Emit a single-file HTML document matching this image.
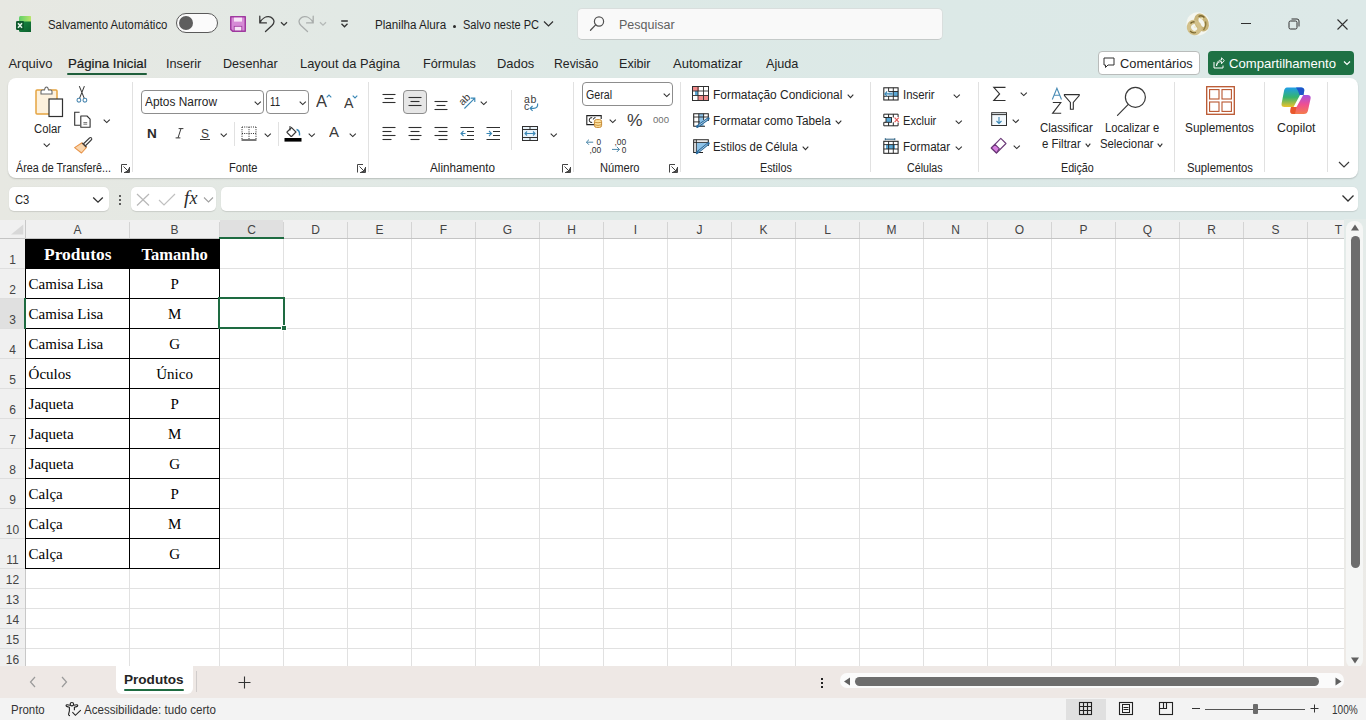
<!DOCTYPE html>
<html><head><meta charset="utf-8">
<style>
*{margin:0;padding:0;box-sizing:border-box}
html,body{width:1366px;height:720px;overflow:hidden;background:#e3ebe8;font-family:"Liberation Sans",sans-serif;color:#242424;position:relative}
.a{position:absolute;white-space:nowrap;line-height:normal;transform-origin:0 0}
svg.a{overflow:visible}
</style></head><body>
<div class="a" style="left:0;top:0;width:1366px;height:220px;background:linear-gradient(90deg,#e7e8e2 0%,#e2e9e5 25%,#dde9e6 45%,#dce9e7 70%,#dde9e8 100%)"></div>
<div class="a" style="left:577px;top:8px;width:366px;height:32px;background:#f9f9f9;border:1px solid #d9dedd;border-bottom-color:#c5cac9;border-radius:5px"></div>
<div class="a" style="left:8px;top:78px;width:1350px;height:100px;background:#fff;border-radius:8px;box-shadow:0 1px 1.5px rgba(0,0,0,.18)"></div>
<div class="a" style="left:9px;top:187px;width:100px;height:24px;background:#fff;border-radius:5px;box-shadow:0 0.5px 1px rgba(0,0,0,.12)"></div>
<div class="a" style="left:131px;top:187px;width:85px;height:24px;background:#fff;border-radius:5px;box-shadow:0 0.5px 1px rgba(0,0,0,.12)"></div>
<div class="a" style="left:221px;top:187px;width:1137px;height:24px;background:#fff;border-radius:5px;box-shadow:0 0.5px 1px rgba(0,0,0,.12)"></div>
<div class="a" style="left:0px;top:220px;width:1344px;height:18px;background:#f0f0f0"></div>
<div class="a" style="left:0px;top:238px;width:25px;height:428px;background:#f0f0f0"></div>
<div class="a" style="left:26px;top:239px;width:1318px;height:427px;background:#fff"></div>
<div class="a" style="left:220px;top:220px;width:63px;height:18px;background:#e0e0e0"></div>
<div class="a" style="left:0px;top:299px;width:24px;height:29px;background:#e0e0e0"></div>
<div class="a" style="left:219px;top:239px;width:1px;height:427px;background:#e1e1e1"></div><div class="a" style="left:219px;top:222px;width:1px;height:16px;background:#d4d4d4"></div><div class="a" style="left:283px;top:239px;width:1px;height:427px;background:#e1e1e1"></div><div class="a" style="left:283px;top:222px;width:1px;height:16px;background:#d4d4d4"></div><div class="a" style="left:347px;top:239px;width:1px;height:427px;background:#e1e1e1"></div><div class="a" style="left:347px;top:222px;width:1px;height:16px;background:#d4d4d4"></div><div class="a" style="left:411px;top:239px;width:1px;height:427px;background:#e1e1e1"></div><div class="a" style="left:411px;top:222px;width:1px;height:16px;background:#d4d4d4"></div><div class="a" style="left:475px;top:239px;width:1px;height:427px;background:#e1e1e1"></div><div class="a" style="left:475px;top:222px;width:1px;height:16px;background:#d4d4d4"></div><div class="a" style="left:539px;top:239px;width:1px;height:427px;background:#e1e1e1"></div><div class="a" style="left:539px;top:222px;width:1px;height:16px;background:#d4d4d4"></div><div class="a" style="left:603px;top:239px;width:1px;height:427px;background:#e1e1e1"></div><div class="a" style="left:603px;top:222px;width:1px;height:16px;background:#d4d4d4"></div><div class="a" style="left:667px;top:239px;width:1px;height:427px;background:#e1e1e1"></div><div class="a" style="left:667px;top:222px;width:1px;height:16px;background:#d4d4d4"></div><div class="a" style="left:731px;top:239px;width:1px;height:427px;background:#e1e1e1"></div><div class="a" style="left:731px;top:222px;width:1px;height:16px;background:#d4d4d4"></div><div class="a" style="left:795px;top:239px;width:1px;height:427px;background:#e1e1e1"></div><div class="a" style="left:795px;top:222px;width:1px;height:16px;background:#d4d4d4"></div><div class="a" style="left:859px;top:239px;width:1px;height:427px;background:#e1e1e1"></div><div class="a" style="left:859px;top:222px;width:1px;height:16px;background:#d4d4d4"></div><div class="a" style="left:923px;top:239px;width:1px;height:427px;background:#e1e1e1"></div><div class="a" style="left:923px;top:222px;width:1px;height:16px;background:#d4d4d4"></div><div class="a" style="left:987px;top:239px;width:1px;height:427px;background:#e1e1e1"></div><div class="a" style="left:987px;top:222px;width:1px;height:16px;background:#d4d4d4"></div><div class="a" style="left:1051px;top:239px;width:1px;height:427px;background:#e1e1e1"></div><div class="a" style="left:1051px;top:222px;width:1px;height:16px;background:#d4d4d4"></div><div class="a" style="left:1115px;top:239px;width:1px;height:427px;background:#e1e1e1"></div><div class="a" style="left:1115px;top:222px;width:1px;height:16px;background:#d4d4d4"></div><div class="a" style="left:1179px;top:239px;width:1px;height:427px;background:#e1e1e1"></div><div class="a" style="left:1179px;top:222px;width:1px;height:16px;background:#d4d4d4"></div><div class="a" style="left:1243px;top:239px;width:1px;height:427px;background:#e1e1e1"></div><div class="a" style="left:1243px;top:222px;width:1px;height:16px;background:#d4d4d4"></div><div class="a" style="left:1307px;top:239px;width:1px;height:427px;background:#e1e1e1"></div><div class="a" style="left:1307px;top:222px;width:1px;height:16px;background:#d4d4d4"></div><div class="a" style="left:129px;top:222px;width:1px;height:16px;background:#d4d4d4"></div><div class="a" style="left:129px;top:239px;width:1px;height:427px;background:#e1e1e1"></div><div class="a" style="left:26px;top:268px;width:1318px;height:1px;background:#e1e1e1"></div><div class="a" style="left:0px;top:268px;width:25px;height:1px;background:#dedede"></div><div class="a" style="left:26px;top:298px;width:1318px;height:1px;background:#e1e1e1"></div><div class="a" style="left:0px;top:298px;width:25px;height:1px;background:#dedede"></div><div class="a" style="left:26px;top:328px;width:1318px;height:1px;background:#e1e1e1"></div><div class="a" style="left:0px;top:328px;width:25px;height:1px;background:#dedede"></div><div class="a" style="left:26px;top:358px;width:1318px;height:1px;background:#e1e1e1"></div><div class="a" style="left:0px;top:358px;width:25px;height:1px;background:#dedede"></div><div class="a" style="left:26px;top:388px;width:1318px;height:1px;background:#e1e1e1"></div><div class="a" style="left:0px;top:388px;width:25px;height:1px;background:#dedede"></div><div class="a" style="left:26px;top:418px;width:1318px;height:1px;background:#e1e1e1"></div><div class="a" style="left:0px;top:418px;width:25px;height:1px;background:#dedede"></div><div class="a" style="left:26px;top:448px;width:1318px;height:1px;background:#e1e1e1"></div><div class="a" style="left:0px;top:448px;width:25px;height:1px;background:#dedede"></div><div class="a" style="left:26px;top:478px;width:1318px;height:1px;background:#e1e1e1"></div><div class="a" style="left:0px;top:478px;width:25px;height:1px;background:#dedede"></div><div class="a" style="left:26px;top:508px;width:1318px;height:1px;background:#e1e1e1"></div><div class="a" style="left:0px;top:508px;width:25px;height:1px;background:#dedede"></div><div class="a" style="left:26px;top:538px;width:1318px;height:1px;background:#e1e1e1"></div><div class="a" style="left:0px;top:538px;width:25px;height:1px;background:#dedede"></div><div class="a" style="left:26px;top:568px;width:1318px;height:1px;background:#e1e1e1"></div><div class="a" style="left:0px;top:568px;width:25px;height:1px;background:#dedede"></div><div class="a" style="left:26px;top:588px;width:1318px;height:1px;background:#e1e1e1"></div><div class="a" style="left:0px;top:588px;width:25px;height:1px;background:#dedede"></div><div class="a" style="left:26px;top:608px;width:1318px;height:1px;background:#e1e1e1"></div><div class="a" style="left:0px;top:608px;width:25px;height:1px;background:#dedede"></div><div class="a" style="left:26px;top:628px;width:1318px;height:1px;background:#e1e1e1"></div><div class="a" style="left:0px;top:628px;width:25px;height:1px;background:#dedede"></div><div class="a" style="left:26px;top:648px;width:1318px;height:1px;background:#e1e1e1"></div><div class="a" style="left:0px;top:648px;width:25px;height:1px;background:#dedede"></div><div class="a" style="left:26px;top:668px;width:1318px;height:1px;background:#e1e1e1"></div><div class="a" style="left:0px;top:668px;width:25px;height:1px;background:#dedede"></div>
<div class="a" style="left:0px;top:238px;width:1344px;height:1px;background:#c4c4c4"></div>
<div class="a" style="left:25px;top:220px;width:1px;height:446px;background:#c8c8c8"></div>
<svg class="a" style="left:8px;top:222px;" width="17" height="15" viewBox="0 0 17 15"><path d="M15.3 2.5 L15.3 12.5 L3 12.5 Z" fill="#d8d8d8"/></svg>
<div class="a" style="left:25px;top:239px;width:195px;height:30px;background:#000"></div>
<div class="a" style="left:25px;top:298px;width:195px;height:1px;background:#000"></div><div class="a" style="left:25px;top:328px;width:195px;height:1px;background:#000"></div><div class="a" style="left:25px;top:358px;width:195px;height:1px;background:#000"></div><div class="a" style="left:25px;top:388px;width:195px;height:1px;background:#000"></div><div class="a" style="left:25px;top:418px;width:195px;height:1px;background:#000"></div><div class="a" style="left:25px;top:448px;width:195px;height:1px;background:#000"></div><div class="a" style="left:25px;top:478px;width:195px;height:1px;background:#000"></div><div class="a" style="left:25px;top:508px;width:195px;height:1px;background:#000"></div><div class="a" style="left:25px;top:538px;width:195px;height:1px;background:#000"></div><div class="a" style="left:25px;top:568px;width:195px;height:1px;background:#000"></div><div class="a" style="left:25px;top:268px;width:1px;height:301px;background:#000"></div><div class="a" style="left:129px;top:268px;width:1px;height:301px;background:#000"></div><div class="a" style="left:219px;top:238px;width:1px;height:331px;background:#000"></div>
<div class="a" style="left:219px;top:237px;width:65px;height:2px;background:#1e6b41"></div>
<div class="a" style="left:24px;top:298px;width:2px;height:31px;background:#1e6b41"></div>
<div class="a" style="left:218px;top:297px;width:67px;height:32px;border:2px solid #1e6b41"></div>
<div class="a" style="left:281px;top:325px;width:6px;height:6px;background:#1e6b41;border:1px solid #fff"></div>
<span class="a" style="left:73.50px;top:222.56px;font-size:12px;font-weight:normal;color:#444;font-family:'Liberation Sans',sans-serif;">A</span>
<span class="a" style="left:170.50px;top:222.56px;font-size:12px;font-weight:normal;color:#444;font-family:'Liberation Sans',sans-serif;">B</span>
<span class="a" style="left:247.17px;top:222.56px;font-size:12px;font-weight:normal;color:#444;font-family:'Liberation Sans',sans-serif;">C</span>
<span class="a" style="left:311.17px;top:222.56px;font-size:12px;font-weight:normal;color:#444;font-family:'Liberation Sans',sans-serif;">D</span>
<span class="a" style="left:375.50px;top:222.56px;font-size:12px;font-weight:normal;color:#444;font-family:'Liberation Sans',sans-serif;">E</span>
<span class="a" style="left:439.83px;top:222.56px;font-size:12px;font-weight:normal;color:#444;font-family:'Liberation Sans',sans-serif;">F</span>
<span class="a" style="left:502.83px;top:222.56px;font-size:12px;font-weight:normal;color:#444;font-family:'Liberation Sans',sans-serif;">G</span>
<span class="a" style="left:567.17px;top:222.56px;font-size:12px;font-weight:normal;color:#444;font-family:'Liberation Sans',sans-serif;">H</span>
<span class="a" style="left:633.83px;top:222.56px;font-size:12px;font-weight:normal;color:#444;font-family:'Liberation Sans',sans-serif;">I</span>
<span class="a" style="left:696.50px;top:222.56px;font-size:12px;font-weight:normal;color:#444;font-family:'Liberation Sans',sans-serif;">J</span>
<span class="a" style="left:759.50px;top:222.56px;font-size:12px;font-weight:normal;color:#444;font-family:'Liberation Sans',sans-serif;">K</span>
<span class="a" style="left:824.16px;top:222.56px;font-size:12px;font-weight:normal;color:#444;font-family:'Liberation Sans',sans-serif;">L</span>
<span class="a" style="left:886.50px;top:222.56px;font-size:12px;font-weight:normal;color:#444;font-family:'Liberation Sans',sans-serif;">M</span>
<span class="a" style="left:951.17px;top:222.56px;font-size:12px;font-weight:normal;color:#444;font-family:'Liberation Sans',sans-serif;">N</span>
<span class="a" style="left:1014.83px;top:222.56px;font-size:12px;font-weight:normal;color:#444;font-family:'Liberation Sans',sans-serif;">O</span>
<span class="a" style="left:1079.50px;top:222.56px;font-size:12px;font-weight:normal;color:#444;font-family:'Liberation Sans',sans-serif;">P</span>
<span class="a" style="left:1142.83px;top:222.56px;font-size:12px;font-weight:normal;color:#444;font-family:'Liberation Sans',sans-serif;">Q</span>
<span class="a" style="left:1207.17px;top:222.56px;font-size:12px;font-weight:normal;color:#444;font-family:'Liberation Sans',sans-serif;">R</span>
<span class="a" style="left:1271.50px;top:222.56px;font-size:12px;font-weight:normal;color:#444;font-family:'Liberation Sans',sans-serif;">S</span>
<span class="a" style="left:1334.83px;top:222.56px;font-size:12px;font-weight:normal;color:#444;font-family:'Liberation Sans',sans-serif;">T</span>
<span class="a" style="left:9.16px;top:253.26px;font-size:12px;font-weight:normal;color:#444;font-family:'Liberation Sans',sans-serif;">1</span>
<span class="a" style="left:9.16px;top:283.26px;font-size:12px;font-weight:normal;color:#444;font-family:'Liberation Sans',sans-serif;">2</span>
<span class="a" style="left:9.16px;top:313.26px;font-size:12px;font-weight:normal;color:#444;font-family:'Liberation Sans',sans-serif;">3</span>
<span class="a" style="left:9.16px;top:343.26px;font-size:12px;font-weight:normal;color:#444;font-family:'Liberation Sans',sans-serif;">4</span>
<span class="a" style="left:9.16px;top:373.26px;font-size:12px;font-weight:normal;color:#444;font-family:'Liberation Sans',sans-serif;">5</span>
<span class="a" style="left:9.16px;top:403.26px;font-size:12px;font-weight:normal;color:#444;font-family:'Liberation Sans',sans-serif;">6</span>
<span class="a" style="left:9.16px;top:433.26px;font-size:12px;font-weight:normal;color:#444;font-family:'Liberation Sans',sans-serif;">7</span>
<span class="a" style="left:9.16px;top:463.26px;font-size:12px;font-weight:normal;color:#444;font-family:'Liberation Sans',sans-serif;">8</span>
<span class="a" style="left:9.16px;top:493.26px;font-size:12px;font-weight:normal;color:#444;font-family:'Liberation Sans',sans-serif;">9</span>
<span class="a" style="left:5.83px;top:523.26px;font-size:12px;font-weight:normal;color:#444;font-family:'Liberation Sans',sans-serif;">10</span>
<span class="a" style="left:6.27px;top:553.26px;font-size:12px;font-weight:normal;color:#444;font-family:'Liberation Sans',sans-serif;">11</span>
<span class="a" style="left:5.83px;top:573.26px;font-size:12px;font-weight:normal;color:#444;font-family:'Liberation Sans',sans-serif;">12</span>
<span class="a" style="left:5.83px;top:593.26px;font-size:12px;font-weight:normal;color:#444;font-family:'Liberation Sans',sans-serif;">13</span>
<span class="a" style="left:5.83px;top:613.26px;font-size:12px;font-weight:normal;color:#444;font-family:'Liberation Sans',sans-serif;">14</span>
<span class="a" style="left:5.83px;top:633.26px;font-size:12px;font-weight:normal;color:#444;font-family:'Liberation Sans',sans-serif;">15</span>
<span class="a" style="left:5.83px;top:653.26px;font-size:12px;font-weight:normal;color:#444;font-family:'Liberation Sans',sans-serif;">16</span>
<span class="a" style="left:44.05px;top:245.49px;font-size:16.5px;font-weight:bold;color:#fff;font-family:'Liberation Serif',sans-serif;transform:scaleX(1.0568);">Produtos</span>
<span class="a" style="left:141.50px;top:245.49px;font-size:16.5px;font-weight:bold;color:#fff;font-family:'Liberation Serif',sans-serif;">Tamanho</span>
<span class="a" style="left:28.60px;top:275.75px;font-size:15px;font-weight:normal;color:#000;font-family:'Liberation Serif',sans-serif;">Camisa Lisa</span>
<span class="a" style="left:170.43px;top:275.75px;font-size:15px;font-weight:normal;color:#000;font-family:'Liberation Serif',sans-serif;">P</span>
<span class="a" style="left:28.60px;top:305.75px;font-size:15px;font-weight:normal;color:#000;font-family:'Liberation Serif',sans-serif;">Camisa Lisa</span>
<span class="a" style="left:167.93px;top:305.75px;font-size:15px;font-weight:normal;color:#000;font-family:'Liberation Serif',sans-serif;">M</span>
<span class="a" style="left:28.60px;top:335.75px;font-size:15px;font-weight:normal;color:#000;font-family:'Liberation Serif',sans-serif;">Camisa Lisa</span>
<span class="a" style="left:169.18px;top:335.75px;font-size:15px;font-weight:normal;color:#000;font-family:'Liberation Serif',sans-serif;">G</span>
<span class="a" style="left:28.60px;top:365.75px;font-size:15px;font-weight:normal;color:#000;font-family:'Liberation Serif',sans-serif;">Óculos</span>
<span class="a" style="left:156.27px;top:365.75px;font-size:15px;font-weight:normal;color:#000;font-family:'Liberation Serif',sans-serif;">Único</span>
<span class="a" style="left:28.60px;top:395.75px;font-size:15px;font-weight:normal;color:#000;font-family:'Liberation Serif',sans-serif;">Jaqueta</span>
<span class="a" style="left:170.43px;top:395.75px;font-size:15px;font-weight:normal;color:#000;font-family:'Liberation Serif',sans-serif;">P</span>
<span class="a" style="left:28.60px;top:425.75px;font-size:15px;font-weight:normal;color:#000;font-family:'Liberation Serif',sans-serif;">Jaqueta</span>
<span class="a" style="left:167.93px;top:425.75px;font-size:15px;font-weight:normal;color:#000;font-family:'Liberation Serif',sans-serif;">M</span>
<span class="a" style="left:28.60px;top:455.75px;font-size:15px;font-weight:normal;color:#000;font-family:'Liberation Serif',sans-serif;">Jaqueta</span>
<span class="a" style="left:169.18px;top:455.75px;font-size:15px;font-weight:normal;color:#000;font-family:'Liberation Serif',sans-serif;">G</span>
<span class="a" style="left:28.60px;top:485.75px;font-size:15px;font-weight:normal;color:#000;font-family:'Liberation Serif',sans-serif;">Calça</span>
<span class="a" style="left:170.43px;top:485.75px;font-size:15px;font-weight:normal;color:#000;font-family:'Liberation Serif',sans-serif;">P</span>
<span class="a" style="left:28.60px;top:515.75px;font-size:15px;font-weight:normal;color:#000;font-family:'Liberation Serif',sans-serif;">Calça</span>
<span class="a" style="left:167.93px;top:515.75px;font-size:15px;font-weight:normal;color:#000;font-family:'Liberation Serif',sans-serif;">M</span>
<span class="a" style="left:28.60px;top:545.75px;font-size:15px;font-weight:normal;color:#000;font-family:'Liberation Serif',sans-serif;">Calça</span>
<span class="a" style="left:169.18px;top:545.75px;font-size:15px;font-weight:normal;color:#000;font-family:'Liberation Serif',sans-serif;">G</span>
<div class="a" style="left:1344px;top:219px;width:22px;height:449px;background:linear-gradient(180deg,#e3ebe9 0%,#e9ebe8 60%,#eeeae6 100%)"></div>
<div class="a" style="left:1346px;top:221px;width:17px;height:447px;background:#f5f6f5;border-radius:8px"></div>
<svg class="a" style="left:1350px;top:223px;" width="11" height="9" viewBox="0 0 11 9"><path d="M1 7.5 L5 1.5 L9 7.5 Z" fill="#606060"/></svg>
<div class="a" style="left:1351px;top:236px;width:9px;height:332px;background:#6d6d6d;border-radius:4.5px"></div>
<svg class="a" style="left:1350px;top:656px;" width="11" height="9" viewBox="0 0 11 9"><path d="M1 1.5 L5 7.5 L9 1.5 Z" fill="#606060"/></svg>
<div class="a" style="left:0px;top:666px;width:1344px;height:32px;background:#eee8e5"></div>
<div class="a" style="left:1344px;top:666px;width:22px;height:32px;background:#eee8e5"></div>
<div class="a" style="left:116px;top:666px;width:77px;height:28px;background:#fff;border-radius:0 0 6px 6px"></div>
<div class="a" style="left:196px;top:671px;width:1px;height:21px;background:#d0cccb"></div>
<div class="a" style="left:840px;top:673px;width:504px;height:15px;background:#fbfbfb;border-radius:7px"></div>
<div class="a" style="left:855px;top:677px;width:464px;height:9px;background:#6d6d6d;border-radius:4.5px"></div>
<svg class="a" style="left:842px;top:676px;" width="10" height="11" viewBox="0 0 10 11"><path d="M8 1.5 L2 5.5 L8 9.5 Z" fill="#606060"/></svg>
<svg class="a" style="left:1334px;top:676px;" width="10" height="11" viewBox="0 0 10 11"><path d="M1.5 1.5 L7.5 5.5 L1.5 9.5 Z" fill="#606060"/></svg>
<div class="a" style="left:821px;top:678px;width:2px;height:2px;background:#222"></div>
<div class="a" style="left:821px;top:682px;width:2px;height:2px;background:#222"></div>
<div class="a" style="left:821px;top:686px;width:2px;height:2px;background:#222"></div>
<span class="a" style="left:124.40px;top:671.94px;font-size:13px;font-weight:bold;color:#242424;font-family:'Liberation Sans',sans-serif;transform:scaleX(1.0429);">Produtos</span>
<div class="a" style="left:124px;top:689px;width:60px;height:2px;background:#1e6b41;border-radius:1px"></div>
<svg class="a" style="left:27px;top:675px;" width="12" height="14" viewBox="0 0 12 14"><path d="M8 2 L3.5 7 L8 12" fill="none" stroke="#9a9a9a" stroke-width="1.2"/></svg>
<svg class="a" style="left:58px;top:675px;" width="12" height="14" viewBox="0 0 12 14"><path d="M4 2 L8.5 7 L4 12" fill="none" stroke="#9a9a9a" stroke-width="1.2"/></svg>
<svg class="a" style="left:238px;top:676px;" width="13" height="13" viewBox="0 0 13 13"><path d="M6.5 0.5 V12.5 M0.5 6.5 H12.5" stroke="#333" stroke-width="1.1"/></svg>
<div class="a" style="left:0px;top:698px;width:1366px;height:22px;background:#f3f3f3"></div>
<span class="a" style="left:11.30px;top:703.36px;font-size:12px;font-weight:normal;color:#333;font-family:'Liberation Sans',sans-serif;transform:scaleX(0.9532);">Pronto</span>
<span class="a" style="left:84.00px;top:703.36px;font-size:12px;font-weight:normal;color:#333;font-family:'Liberation Sans',sans-serif;transform:scaleX(0.9653);">Acessibilidade: tudo certo</span>
<div class="a" style="left:1066px;top:699px;width:40px;height:21px;background:#e0e0e0"></div>
<span class="a" style="left:1332.00px;top:702.56px;font-size:12px;font-weight:normal;color:#333;font-family:'Liberation Sans',sans-serif;transform:scaleX(0.8406);">100%</span>
<svg class="a" style="left:16px;top:16px;" width="16" height="16" viewBox="0 0 16 16"><defs><linearGradient id="xg1" x1="0" y1="0" x2="1" y2="0"><stop offset="0" stop-color="#5fcf6a"/><stop offset="1" stop-color="#b9e56a"/></linearGradient>
<linearGradient id="xg2" x1="0" y1="0" x2="1" y2="1"><stop offset="0" stop-color="#1b8a45"/><stop offset="1" stop-color="#0b5f2c"/></linearGradient></defs>
<path d="M3 1.5 Q3 0 4.5 0 H14.5 Q15 0 15 1 V6 H3 Z" fill="url(#xg1)"/>
<path d="M3 5.5 H15 V16 H4.5 Q3 16 3 14.5 Z" fill="url(#xg2)"/>
<rect x="0" y="5" width="8" height="9" rx="1.2" fill="#0e5a2d"/>
<path d="M2 7.3 L6 11.7 M6 7.3 L2 11.7" stroke="#e8f5ec" stroke-width="1.6"/></svg>
<span class="a" style="left:48.30px;top:17.76px;font-size:12px;font-weight:normal;color:#1f1f1f;font-family:'Liberation Sans',sans-serif;transform:scaleX(0.9469);">Salvamento Automático</span>
<div class="a" style="left:176px;top:13px;width:42px;height:20px;border:1px solid #5a5a5a;border-radius:10px;background:#fbfbfb"></div>
<div class="a" style="left:179px;top:16px;width:14px;height:14px;border-radius:7px;background:#5e5e5e"></div>
<svg class="a" style="left:230px;top:16px;" width="17" height="17" viewBox="0 0 17 17"><path d="M0.75 0.75 H15.25 V15.25 H2.6 L0.75 13.4 Z" fill="#d68bd6" stroke="#9f3a9f" stroke-width="1.5" stroke-linejoin="round"/>
<rect x="4" y="1.6" width="8" height="4" fill="#f7e4f7"/>
<rect x="4.2" y="10.3" width="7.6" height="4.6" fill="#f7e4f7" stroke="#9f3a9f" stroke-width="0.8"/></svg>
<svg class="a" style="left:258px;top:15px;" width="18" height="18" viewBox="0 0 18 18"><path d="M1.8 1.2 V7.9 H8.4 M2.1 7.6 C4 3.2 8 1.6 10.5 1.7 C14 2 16 4.5 16 6.5 C16 8.5 15 9.5 14 10.5 L7.5 16.5" fill="none" stroke="#383838" stroke-width="1.3" stroke-linecap="round" stroke-linejoin="round"/></svg>
<svg class="a" style="left:280px;top:21px;" width="8" height="6" viewBox="0 0 8 6"><path d="M1 1.2 L4 4.2 L7 1.2" fill="none" stroke="#383838" stroke-width="1.3"/></svg>
<svg class="a" style="left:297px;top:15px;" width="18" height="18" viewBox="0 0 18 18"><path d="M16.2 1.2 V7.9 H9.6 M15.9 7.6 C14 3.2 10 1.6 7.5 1.7 C4 2 2 4.5 2 6.5 C2 8.5 3 9.5 4 10.5 L10.5 16.5" fill="none" stroke="#a9adac" stroke-width="1.3" stroke-linecap="round" stroke-linejoin="round"/></svg>
<svg class="a" style="left:319px;top:21px;" width="8" height="6" viewBox="0 0 8 6"><path d="M1 1.2 L4 4.2 L7 1.2" fill="none" stroke="#b5b9b8" stroke-width="1.3"/></svg>
<svg class="a" style="left:340px;top:20px;" width="9" height="9" viewBox="0 0 9 9"><path d="M1.2 1 H7.8 M1.5 3.8 L4.5 6.8 L7.5 3.8" fill="none" stroke="#303030" stroke-width="1.3"/></svg>
<span class="a" style="left:374.60px;top:18.36px;font-size:12px;font-weight:normal;color:#1f1f1f;font-family:'Liberation Sans',sans-serif;transform:scaleX(0.9697);">Planilha Alura</span>
<div class="a" style="left:452.8px;top:24.6px;width:3.4px;height:3.4px;background:#2a2a2a;border-radius:1.7px"></div>
<span class="a" style="left:462.70px;top:18.36px;font-size:12px;font-weight:normal;color:#1f1f1f;font-family:'Liberation Sans',sans-serif;transform:scaleX(0.9189);">Salvo neste PC</span>
<svg class="a" style="left:543px;top:20px;" width="11" height="8" viewBox="0 0 11 8"><path d="M1 1.5 L5.5 6 L10 1.5" fill="none" stroke="#303030" stroke-width="1.2"/></svg>
<svg class="a" style="left:588px;top:14px;" width="16" height="18" viewBox="0 0 16 18"><circle cx="11" cy="7.5" r="4.6" fill="none" stroke="#505050" stroke-width="1.2"/><path d="M7.6 10.9 L2.5 16.3" stroke="#505050" stroke-width="1.3" stroke-linecap="round"/></svg>
<span class="a" style="left:618.60px;top:18.16px;font-size:12px;font-weight:normal;color:#606060;font-family:'Liberation Sans',sans-serif;transform:scaleX(1.0420);">Pesquisar</span>
<svg class="a" style="left:1186px;top:12px;" width="24" height="24" viewBox="0 0 24 24"><circle cx="12" cy="11.8" r="11.6" fill="#f4f6f0"/>
<ellipse cx="15.5" cy="10.5" rx="4.6" ry="7.2" fill="none" stroke="#c7b47a" stroke-width="4.4" transform="rotate(-28 15.5 10.5)"/>
<path d="M12.5 4.5 Q15.5 2.5 18.5 5.5" fill="none" stroke="#7a6630" stroke-width="1.4"/>
<path d="M19.5 9.5 Q20.5 14 17.5 18" fill="none" stroke="#8f7a3c" stroke-width="1.3"/>
<ellipse cx="8.3" cy="15.5" rx="5.2" ry="5.6" fill="none" stroke="#d2c08a" stroke-width="4.4" transform="rotate(-35 8.3 15.5)"/>
<path d="M4.5 11.5 Q6 9.5 8.5 10" fill="none" stroke="#6e5c28" stroke-width="1.4"/>
<path d="M4 19 Q6.5 21.5 10 20.5" fill="none" stroke="#7d6a30" stroke-width="1.3"/>
<circle cx="16" cy="6.5" r="1" fill="#efe6c0"/><circle cx="9" cy="15" r="1.1" fill="#f3ebcc"/></svg>
<div class="a" style="left:1241px;top:23px;width:10px;height:1px;background:#303030"></div>
<svg class="a" style="left:1288px;top:18px;" width="12" height="12" viewBox="0 0 12 12"><rect x="1" y="3" width="8" height="8" rx="1.5" fill="none" stroke="#303030" stroke-width="1"/><path d="M3.5 1 H9 Q11 1 11 3 V8.5" fill="none" stroke="#303030" stroke-width="1"/></svg>
<svg class="a" style="left:1337px;top:19px;" width="11" height="11" viewBox="0 0 11 11"><path d="M0.5 0.5 L10.5 10.5 M10.5 0.5 L0.5 10.5" stroke="#303030" stroke-width="1.1"/></svg>
<span class="a" style="left:8.40px;top:55.94px;font-size:13px;font-weight:normal;color:#242424;font-family:'Liberation Sans',sans-serif;">Arquivo</span>
<span class="a" style="left:67.70px;top:55.94px;font-size:13px;font-weight:normal;color:#1a1a1a;font-family:'Liberation Sans',sans-serif;transform:scaleX(1.0165);-webkit-text-stroke:0.2px #1a1a1a;">Página Inicial</span>
<div class="a" style="left:67px;top:72.6px;width:80px;height:2.2px;background:#1f5f3b;border-radius:1.2px"></div>
<span class="a" style="left:166.00px;top:55.94px;font-size:13px;font-weight:normal;color:#242424;font-family:'Liberation Sans',sans-serif;transform:scaleX(0.9773);">Inserir</span>
<span class="a" style="left:223.20px;top:55.94px;font-size:13px;font-weight:normal;color:#242424;font-family:'Liberation Sans',sans-serif;transform:scaleX(0.9686);">Desenhar</span>
<span class="a" style="left:299.70px;top:55.94px;font-size:13px;font-weight:normal;color:#242424;font-family:'Liberation Sans',sans-serif;transform:scaleX(0.9882);">Layout da Página</span>
<span class="a" style="left:422.60px;top:55.94px;font-size:13px;font-weight:normal;color:#242424;font-family:'Liberation Sans',sans-serif;transform:scaleX(0.9746);">Fórmulas</span>
<span class="a" style="left:497.10px;top:55.94px;font-size:13px;font-weight:normal;color:#242424;font-family:'Liberation Sans',sans-serif;transform:scaleX(0.9926);">Dados</span>
<span class="a" style="left:554.20px;top:55.94px;font-size:13px;font-weight:normal;color:#242424;font-family:'Liberation Sans',sans-serif;transform:scaleX(0.9411);">Revisão</span>
<span class="a" style="left:619.00px;top:55.94px;font-size:13px;font-weight:normal;color:#242424;font-family:'Liberation Sans',sans-serif;transform:scaleX(0.9690);">Exibir</span>
<span class="a" style="left:673.00px;top:55.94px;font-size:13px;font-weight:normal;color:#242424;font-family:'Liberation Sans',sans-serif;">Automatizar</span>
<span class="a" style="left:766.20px;top:55.94px;font-size:13px;font-weight:normal;color:#242424;font-family:'Liberation Sans',sans-serif;transform:scaleX(0.9745);">Ajuda</span>
<div class="a" style="left:1098px;top:51px;width:102px;height:24px;background:#fff;border:1px solid #b9bcbb;border-radius:4px"></div>
<svg class="a" style="left:1103px;top:57px;" width="12" height="12" viewBox="0 0 12 12"><path d="M1 1 H11 V8 H5 L2.5 10.5 V8 H1 Z" fill="none" stroke="#303030" stroke-width="1" stroke-linejoin="round"/></svg>
<span class="a" style="left:1119.90px;top:55.94px;font-size:13px;font-weight:normal;color:#242424;font-family:'Liberation Sans',sans-serif;transform:scaleX(0.9865);">Comentários</span>
<div class="a" style="left:1208px;top:51px;width:146px;height:24px;background:#1e7144;border-radius:4px"></div>
<svg class="a" style="left:1212px;top:57px;" width="13" height="12" viewBox="0 0 13 12"><path d="M2 5 V11 H11 V8.5" fill="none" stroke="#fff" stroke-width="1"/><path d="M4.5 9 C5 6 7 4.5 9.5 4.5 V6.8 L12.3 3.5 L9.5 0.8 V3 C6.5 3 4.5 5.5 4.5 9 Z" fill="none" stroke="#fff" stroke-width="0.9" stroke-linejoin="round"/></svg>
<span class="a" style="left:1229.40px;top:55.94px;font-size:13px;font-weight:normal;color:#fff;font-family:'Liberation Sans',sans-serif;transform:scaleX(1.0074);">Compartilhamento</span>
<svg class="a" style="left:1343px;top:60px;" width="8" height="6" viewBox="0 0 8 6"><path d="M1 1.5 L4 4.5 L7 1.5" fill="none" stroke="#fff" stroke-width="1.2"/></svg>
<span class="a" style="left:15.20px;top:193.36px;font-size:12px;font-weight:normal;color:#242424;font-family:'Liberation Sans',sans-serif;transform:scaleX(0.9322);">C3</span>
<svg class="a" style="left:92px;top:196px;" width="12" height="8" viewBox="0 0 12 8"><path d="M1.2 1.5 L6 6.2 L10.8 1.5" fill="none" stroke="#303030" stroke-width="1.3"/></svg>
<div class="a" style="left:119px;top:195px;width:2.2px;height:2.2px;background:#303030;border-radius:1px"></div>
<div class="a" style="left:119px;top:199px;width:2.2px;height:2.2px;background:#303030;border-radius:1px"></div>
<div class="a" style="left:119px;top:203px;width:2.2px;height:2.2px;background:#303030;border-radius:1px"></div>
<svg class="a" style="left:136px;top:193px;" width="14" height="13" viewBox="0 0 14 13"><path d="M1 1 L13 12.5 M13 1 L1 12.5" stroke="#b8b8b8" stroke-width="1.2"/></svg>
<svg class="a" style="left:158px;top:193px;" width="18" height="13" viewBox="0 0 18 13"><path d="M1 7 L6 12 L17 1" fill="none" stroke="#c0c0c0" stroke-width="1.2"/></svg>
<span class="a" style="left:184px;top:187px;font-family:'Liberation Serif',serif;font-style:italic;font-size:19px;color:#2a2a2a;letter-spacing:0.3px">f<span style="font-size:18px">x</span></span>
<svg class="a" style="left:203px;top:196px;" width="11" height="8" viewBox="0 0 11 8"><path d="M1 1.5 L5.5 6 L10 1.5" fill="none" stroke="#a0a0a0" stroke-width="1.1"/></svg>
<svg class="a" style="left:1341px;top:194px;" width="14" height="9" viewBox="0 0 14 9"><path d="M1.5 1.5 L7 7 L12.5 1.5" fill="none" stroke="#303030" stroke-width="1.3"/></svg>
<svg class="a" style="left:35px;top:86px;" width="29" height="32" viewBox="0 0 29 32"><rect x="1" y="4" width="21" height="24" rx="1" fill="#fdf1dd" stroke="#e5a440" stroke-width="1.5"/>
<path d="M6 8 V5.5 Q6 4 7.5 4 H9.5 Q10 1 11.5 1 Q13 1 13.5 4 H15.5 Q17 4 17 5.5 V8 Z" fill="#fff" stroke="#6a6a6a" stroke-width="1.1"/>
<rect x="14" y="13" width="13.5" height="17.5" fill="#fff" stroke="#303030" stroke-width="1.2"/></svg>
<span class="a" style="left:33.70px;top:122.46px;font-size:12px;font-weight:normal;color:#242424;font-family:'Liberation Sans',sans-serif;transform:scaleX(0.9416);">Colar</span>
<svg class="a" style="left:43px;top:142.5px;" width="7.5" height="5" viewBox="0 0 7.5 5"><path d="M0.7 0.6 L3.75 3.6 L6.8 0.6" fill="none" stroke="#303030" stroke-width="1.1"/></svg>
<svg class="a" style="left:70px;top:82px;" width="24" height="74" viewBox="0 0 24 74"><path d="M9.3 4.1 L14.3 16.4 M14.4 4.1 L9.5 16.4" stroke="#3d3d3d" stroke-width="1.05"/>
<circle cx="8.9" cy="18.2" r="1.9" fill="none" stroke="#4a87b0" stroke-width="1.1"/><circle cx="14.9" cy="18.2" r="1.9" fill="none" stroke="#4a87b0" stroke-width="1.1"/>
<path d="M7.5 43.2 H4.7 V43.2 M9.6 30.3 H4.7 V43.2 H10" fill="none" stroke="#303030" stroke-width="1.1"/>
<path d="M10.8 34 H17 L20.1 37.1 V45.2 H10.8 Z" fill="#fff" stroke="#303030" stroke-width="1.1" stroke-linejoin="round"/>
<path d="M13.4 40.6 H17.2 M13.4 42.2 H17.2" stroke="#505050" stroke-width="0.8"/>
<path d="M13.3 62 L19.5 56 Q20.7 55 21.5 56 Q22.3 57 21.2 58 L15.2 64" fill="#fff" stroke="#3d3d3d" stroke-width="1.1"/>
<path d="M12 60.8 L16.5 65.3 L11.5 71 L4.6 65.6 Z" fill="#f9d6ae" stroke="#e8944a" stroke-width="1.1" stroke-linejoin="round"/>
<path d="M12.3 61 L16.3 65" stroke="#3d3d3d" stroke-width="1.4"/></svg>
<svg class="a" style="left:103px;top:119px;" width="7.5" height="5" viewBox="0 0 7.5 5"><path d="M0.7 0.6 L3.75 3.6 L6.8 0.6" fill="none" stroke="#303030" stroke-width="1.1"/></svg>
<span class="a" style="left:16.30px;top:161.36px;font-size:12px;font-weight:normal;color:#242424;font-family:'Liberation Sans',sans-serif;transform:scaleX(0.8958);">Área de Transferê...</span>
<svg class="a" style="left:121px;top:163.5px;" width="9" height="9" viewBox="0 0 9 9"><path d="M0.5 8.5 V0.5 H6 M8.5 3 V8.5 H3 M2.5 2.5 L7.5 7.5 M7.5 4.5 V7.5 H4.5" fill="none" stroke="#444" stroke-width="1"/></svg>
<div class="a" style="left:132px;top:82px;width:1px;height:90px;background:#e1e1e1"></div>
<div class="a" style="left:141px;top:90px;width:123px;height:24px;border:1px solid #8d8d8d;border-radius:4px;background:#fff"></div>
<span class="a" style="left:144.60px;top:95.36px;font-size:12px;font-weight:normal;color:#242424;font-family:'Liberation Sans',sans-serif;transform:scaleX(0.9905);">Aptos Narrow</span>
<svg class="a" style="left:254px;top:100.5px;" width="7.5" height="5" viewBox="0 0 7.5 5"><path d="M0.7 0.6 L3.75 3.6 L6.8 0.6" fill="none" stroke="#303030" stroke-width="1.1"/></svg>
<div class="a" style="left:266px;top:90px;width:43px;height:24px;border:1px solid #8d8d8d;border-radius:4px;background:#fff"></div>
<span class="a" style="left:270.00px;top:95.36px;font-size:12px;font-weight:normal;color:#242424;font-family:'Liberation Sans',sans-serif;transform:scaleX(0.8028);">11</span>
<svg class="a" style="left:299px;top:100.5px;" width="7.5" height="5" viewBox="0 0 7.5 5"><path d="M0.7 0.6 L3.75 3.6 L6.8 0.6" fill="none" stroke="#303030" stroke-width="1.1"/></svg>
<span class="a" style="left:316.00px;top:91.96px;font-size:17px;font-weight:normal;color:#3a3a3a;font-family:'Liberation Sans',sans-serif;transform:scaleX(0.9701);">A</span>
<svg class="a" style="left:326px;top:94px;" width="6" height="4" viewBox="0 0 6 4"><path d="M0.7 3.3 L3 1 L5.3 3.3" fill="none" stroke="#3a87b5" stroke-width="1.1"/></svg>
<span class="a" style="left:343.50px;top:94.72px;font-size:14px;font-weight:normal;color:#3a3a3a;font-family:'Liberation Sans',sans-serif;transform:scaleX(1.0174);">A</span>
<svg class="a" style="left:352px;top:95px;" width="6" height="4" viewBox="0 0 6 4"><path d="M0.7 0.7 L3 3 L5.3 0.7" fill="none" stroke="#3a87b5" stroke-width="1.1"/></svg>
<span class="a" style="left:147.40px;top:125.98px;font-size:13.5px;font-weight:bold;color:#2a2a2a;font-family:'Liberation Sans',sans-serif;transform:scaleX(1.0052);">N</span>
<svg class="a" style="left:175px;top:128px;" width="9" height="11" viewBox="0 0 9 11"><path d="M3.6 0.6 H8.4 M0.6 9.9 H5.4 M6 0.6 L3 9.9" fill="none" stroke="#3a3a3a" stroke-width="1"/></svg>
<span class="a" style="left:200.80px;top:126.14px;font-size:13px;font-weight:normal;color:#3a3a3a;font-family:'Liberation Sans',sans-serif;transform:scaleX(0.9226);">S</span>
<div class="a" style="left:200px;top:139px;width:10px;height:1.2px;background:#3a3a3a"></div>
<svg class="a" style="left:220px;top:132.5px;" width="7.5" height="5" viewBox="0 0 7.5 5"><path d="M0.7 0.6 L3.75 3.6 L6.8 0.6" fill="none" stroke="#303030" stroke-width="1.1"/></svg>
<div class="a" style="left:234px;top:121.5px;width:1px;height:24.5px;background:#e1e1e1"></div>
<svg class="a" style="left:241px;top:126px;" width="16" height="15" viewBox="0 0 16 15"><path d="M1 1 H15 M1 1 V14 M15 1 V14 M8 1 V14 M1 7.5 H15" fill="none" stroke="#303030" stroke-width="1" stroke-dasharray="1 1.2"/>
<path d="M0.5 14 H15.5" stroke="#303030" stroke-width="1.3"/></svg>
<svg class="a" style="left:264px;top:132.5px;" width="7.5" height="5" viewBox="0 0 7.5 5"><path d="M0.7 0.6 L3.75 3.6 L6.8 0.6" fill="none" stroke="#303030" stroke-width="1.1"/></svg>
<div class="a" style="left:278px;top:121.5px;width:1px;height:24.5px;background:#e1e1e1"></div>
<svg class="a" style="left:284px;top:125px;" width="18" height="17" viewBox="0 0 18 17"><path d="M3 7 L7.5 2.5 L12 7 L8 11 Q7.3 11.7 6.6 11 L3 7.4 Z" fill="#fff" stroke="#3a3a3a" stroke-width="1.1"/>
<path d="M6 1 V5.5" stroke="#3a3a3a" stroke-width="1.1"/><path d="M12.5 4.5 Q15 5 15.5 8 L15.5 10.5" fill="none" stroke="#3a87b5" stroke-width="1.4"/>
<rect x="0.5" y="13" width="17" height="3.6" fill="#000"/></svg>
<svg class="a" style="left:308px;top:132.5px;" width="7.5" height="5" viewBox="0 0 7.5 5"><path d="M0.7 0.6 L3.75 3.6 L6.8 0.6" fill="none" stroke="#303030" stroke-width="1.1"/></svg>
<span class="a" style="left:329.00px;top:124.22px;font-size:14px;font-weight:normal;color:#3a3a3a;font-family:'Liberation Sans',sans-serif;transform:scaleX(1.0709);">A</span>
<svg class="a" style="left:349px;top:132.5px;" width="7.5" height="5" viewBox="0 0 7.5 5"><path d="M0.7 0.6 L3.75 3.6 L6.8 0.6" fill="none" stroke="#303030" stroke-width="1.1"/></svg>
<span class="a" style="left:228.60px;top:161.36px;font-size:12px;font-weight:normal;color:#242424;font-family:'Liberation Sans',sans-serif;transform:scaleX(0.9255);">Fonte</span>
<svg class="a" style="left:357px;top:163.5px;" width="9" height="9" viewBox="0 0 9 9"><path d="M0.5 8.5 V0.5 H6 M8.5 3 V8.5 H3 M2.5 2.5 L7.5 7.5 M7.5 4.5 V7.5 H4.5" fill="none" stroke="#444" stroke-width="1"/></svg>
<div class="a" style="left:368px;top:82px;width:1px;height:90px;background:#e1e1e1"></div>
<svg class="a" style="left:382px;top:94px;" width="16" height="16" viewBox="0 0 16 16"><path d="M0.5 0.5 H13.5" stroke="#303030" stroke-width="1.1"/><path d="M2.5 4.5 H11.5" stroke="#303030" stroke-width="1.1"/><path d="M0.5 8.5 H13.5" stroke="#303030" stroke-width="1.1"/></svg>
<div class="a" style="left:403px;top:90px;width:24px;height:24px;background:#e6e6e6;border:1px solid #8d8d8d;border-radius:4px"></div>
<svg class="a" style="left:408px;top:97px;" width="16" height="16" viewBox="0 0 16 16"><path d="M0.5 0.5 H13.5" stroke="#303030" stroke-width="1.1"/><path d="M2.5 4.5 H11.5" stroke="#303030" stroke-width="1.1"/><path d="M0.5 8.5 H13.5" stroke="#303030" stroke-width="1.1"/></svg>
<svg class="a" style="left:434px;top:101px;" width="16" height="16" viewBox="0 0 16 16"><path d="M0.5 0.5 H13.5" stroke="#303030" stroke-width="1.1"/><path d="M2.5 4.5 H11.5" stroke="#303030" stroke-width="1.1"/><path d="M0.5 8.5 H13.5" stroke="#303030" stroke-width="1.1"/></svg>
<svg class="a" style="left:456px;top:90px;" width="22" height="22" viewBox="0 0 22 22"><text x="2.2" y="13.2" font-family="Liberation Sans" font-size="10.5" fill="#3a3a3a" transform="rotate(-45 8 9)">ab</text>
<path d="M8.4 18.5 L18.6 8.3 M14.8 8.1 H18.8 V12.1" fill="none" stroke="#3a87b5" stroke-width="1.1"/></svg>
<svg class="a" style="left:480px;top:101px;" width="7.5" height="5" viewBox="0 0 7.5 5"><path d="M0.7 0.6 L3.75 3.6 L6.8 0.6" fill="none" stroke="#303030" stroke-width="1.1"/></svg>
<svg class="a" style="left:382px;top:127px;" width="16" height="16" viewBox="0 0 16 16"><path d="M0.5 0.5 H13.5" stroke="#303030" stroke-width="1.1"/><path d="M0.5 4.5 H9.5" stroke="#303030" stroke-width="1.1"/><path d="M0.5 8.5 H13.5" stroke="#303030" stroke-width="1.1"/><path d="M0.5 12.5 H9.5" stroke="#303030" stroke-width="1.1"/></svg>
<svg class="a" style="left:408px;top:127px;" width="16" height="16" viewBox="0 0 16 16"><path d="M0.5 0.5 H13.5" stroke="#303030" stroke-width="1.1"/><path d="M2.5 4.5 H11.5" stroke="#303030" stroke-width="1.1"/><path d="M0.5 8.5 H13.5" stroke="#303030" stroke-width="1.1"/><path d="M2.5 12.5 H11.5" stroke="#303030" stroke-width="1.1"/></svg>
<svg class="a" style="left:434px;top:127px;" width="16" height="16" viewBox="0 0 16 16"><path d="M0.5 0.5 H13.5" stroke="#303030" stroke-width="1.1"/><path d="M4.5 4.5 H13.5" stroke="#303030" stroke-width="1.1"/><path d="M0.5 8.5 H13.5" stroke="#303030" stroke-width="1.1"/><path d="M4.5 12.5 H13.5" stroke="#303030" stroke-width="1.1"/></svg>
<svg class="a" style="left:460px;top:127px;" width="16" height="14" viewBox="0 0 16 14"><path d="M0.5 0.5 H14 M7 4.5 H14 M7 8.5 H14 M0.5 12.5 H14" stroke="#303030" stroke-width="1.1"/>
<path d="M5.5 6.5 H1 M3.5 4 L1 6.5 L3.5 9" fill="none" stroke="#3a87b5" stroke-width="1.1"/></svg>
<svg class="a" style="left:486px;top:127px;" width="16" height="14" viewBox="0 0 16 14"><path d="M0.5 0.5 H14 M7 4.5 H14 M7 8.5 H14 M0.5 12.5 H14" stroke="#303030" stroke-width="1.1"/>
<path d="M0.5 6.5 H5 M3 4 L5.5 6.5 L3 9" fill="none" stroke="#3a87b5" stroke-width="1.1"/></svg>
<div class="a" style="left:511px;top:90px;width:1px;height:60px;background:#e1e1e1"></div>
<svg class="a" style="left:523px;top:94px;" width="17" height="18" viewBox="0 0 17 18"><text x="1" y="8.6" font-family="Liberation Sans" font-size="10.5" fill="#3a3a3a" letter-spacing="0.6">ab</text><text x="1" y="16.2" font-family="Liberation Sans" font-size="10.5" fill="#3a3a3a">c</text>
<path d="M14.6 9.5 Q15.2 14.3 10.5 14.3 H7.5 M9.6 11.8 L7.1 14.3 L9.6 16.8" fill="none" stroke="#3a87b5" stroke-width="1.2"/></svg>
<svg class="a" style="left:522px;top:126px;" width="16" height="15" viewBox="0 0 16 15"><rect x="0.5" y="0.5" width="15" height="14" fill="#e8f3fa" stroke="#303030" stroke-width="1"/>
<path d="M0.5 3.5 H15.5 M0.5 11.5 H15.5 M8 0.5 V3.5 M8 11.5 V14.5" stroke="#303030" stroke-width="1"/>
<path d="M3 7.5 H13 M5 5.5 L3 7.5 L5 9.5 M11 5.5 L13 7.5 L11 9.5" fill="none" stroke="#3a87b5" stroke-width="1.1"/></svg>
<svg class="a" style="left:550px;top:132.5px;" width="7.5" height="5" viewBox="0 0 7.5 5"><path d="M0.7 0.6 L3.75 3.6 L6.8 0.6" fill="none" stroke="#303030" stroke-width="1.1"/></svg>
<span class="a" style="left:430.00px;top:161.36px;font-size:12px;font-weight:normal;color:#242424;font-family:'Liberation Sans',sans-serif;transform:scaleX(0.9744);">Alinhamento</span>
<svg class="a" style="left:562px;top:163.5px;" width="9" height="9" viewBox="0 0 9 9"><path d="M0.5 8.5 V0.5 H6 M8.5 3 V8.5 H3 M2.5 2.5 L7.5 7.5 M7.5 4.5 V7.5 H4.5" fill="none" stroke="#444" stroke-width="1"/></svg>
<div class="a" style="left:573px;top:82px;width:1px;height:90px;background:#e1e1e1"></div>
<div class="a" style="left:582px;top:82px;width:91px;height:24px;border:1px solid #8d8d8d;border-radius:4px;background:#fff"></div>
<span class="a" style="left:585.80px;top:87.56px;font-size:12px;font-weight:normal;color:#242424;font-family:'Liberation Sans',sans-serif;transform:scaleX(0.8860);">Geral</span>
<svg class="a" style="left:663px;top:92.5px;" width="7.5" height="5" viewBox="0 0 7.5 5"><path d="M0.7 0.6 L3.75 3.6 L6.8 0.6" fill="none" stroke="#303030" stroke-width="1.1"/></svg>
<svg class="a" style="left:585px;top:114px;" width="18" height="15" viewBox="0 0 18 15"><path d="M9 10.6 H1.8 V1.6 H16.2 V5" fill="none" stroke="#222" stroke-width="1.1"/>
<path d="M7.2 3.6 Q4.2 3.3 4.2 6.1 Q4.2 8.8 7.2 8.5 M10.5 3.6 Q8.5 3.6 8.3 5.5" fill="none" stroke="#222" stroke-width="1"/>
<rect x="9.4" y="5.6" width="7.2" height="7.8" rx="2" fill="#fde3a0" stroke="#c68a35" stroke-width="1"/>
<path d="M9.6 8.2 Q13 9.4 16.4 8.2 M9.6 10.8 Q13 12 16.4 10.8" fill="none" stroke="#c68a35" stroke-width="0.9"/></svg>
<svg class="a" style="left:609px;top:119px;" width="7.5" height="5" viewBox="0 0 7.5 5"><path d="M0.7 0.6 L3.75 3.6 L6.8 0.6" fill="none" stroke="#303030" stroke-width="1.1"/></svg>
<span class="a" style="left:627.00px;top:111.46px;font-size:17px;font-weight:normal;color:#3a3a3a;font-family:'Liberation Sans',sans-serif;transform:scaleX(1.0254);">%</span>
<span class="a" style="left:652.80px;top:115.32px;font-size:9px;font-weight:normal;color:#707070;font-family:'Liberation Sans',sans-serif;transform:scaleX(1.0655);">000</span>
<svg class="a" style="left:585px;top:136px;" width="18" height="18" viewBox="0 0 18 18"><path d="M8.2 6.2 H1.4 M4 3.6 L1.4 6.2 L4 8.8" fill="none" stroke="#4a86a8" stroke-width="1"/>
<text x="11.6" y="9" font-family="Liberation Sans" font-size="9.6" fill="#303030" textLength="4.6" lengthAdjust="spacingAndGlyphs">0</text>
<text x="4.4" y="16.8" font-family="Liberation Sans" font-size="9.6" fill="#303030" textLength="11.8" lengthAdjust="spacingAndGlyphs">,00</text></svg>
<svg class="a" style="left:610px;top:136px;" width="18" height="18" viewBox="0 0 18 18"><text x="4.4" y="9" font-family="Liberation Sans" font-size="9.6" fill="#303030" textLength="11.8" lengthAdjust="spacingAndGlyphs">,00</text>
<path d="M2 13.4 H9.4 M6.8 10.8 L9.4 13.4 L6.8 16" fill="none" stroke="#4a86a8" stroke-width="1"/>
<text x="11.8" y="16.8" font-family="Liberation Sans" font-size="9.6" fill="#303030" textLength="4.6" lengthAdjust="spacingAndGlyphs">0</text></svg>
<span class="a" style="left:599.70px;top:161.36px;font-size:12px;font-weight:normal;color:#242424;font-family:'Liberation Sans',sans-serif;transform:scaleX(0.9255);">Número</span>
<svg class="a" style="left:669px;top:163.5px;" width="9" height="9" viewBox="0 0 9 9"><path d="M0.5 8.5 V0.5 H6 M8.5 3 V8.5 H3 M2.5 2.5 L7.5 7.5 M7.5 4.5 V7.5 H4.5" fill="none" stroke="#444" stroke-width="1"/></svg>
<div class="a" style="left:680px;top:82px;width:1px;height:90px;background:#e1e1e1"></div>
<svg class="a" style="left:692px;top:86px;" width="17" height="16" viewBox="0 0 17 16"><rect x="0.5" y="0.5" width="16" height="14" fill="#fff" stroke="#303030" stroke-width="1"/>
<rect x="1" y="1" width="6" height="4" fill="#f28b8b"/><rect x="6" y="9" width="10" height="5" fill="#f28b8b"/><rect x="3" y="5" width="3" height="4" fill="#5aa8d6"/>
<path d="M0.5 5 H16.5 M0.5 9.5 H16.5 M6 0.5 V14.5 M11.5 0.5 V14.5" stroke="#303030" stroke-width="0.9"/></svg>
<span class="a" style="left:713.40px;top:87.90px;font-size:12.5px;font-weight:normal;color:#242424;font-family:'Liberation Sans',sans-serif;transform:scaleX(0.9551);">Formatação Condicional</span>
<svg class="a" style="left:846.5px;top:93.5px;" width="7" height="5" viewBox="0 0 7 5"><path d="M0.7 0.6 L3.5 3.6 L6.3 0.6" fill="none" stroke="#303030" stroke-width="1.1"/></svg>
<svg class="a" style="left:692px;top:112px;" width="18" height="16" viewBox="0 0 18 16"><rect x="6.8" y="1.7" width="4.8" height="12.6" fill="#8ec3e8"/>
<path d="M13 14.3 H1.7 V1.7 H16.3 V9" fill="none" stroke="#222" stroke-width="1.05"/>
<path d="M6.8 1.7 V14.3 M11.6 1.7 V8 M1.7 5 H16.3 M1.7 9.9 H8" stroke="#222" stroke-width="0.9"/>
<path d="M5.2 14.6 L16.4 6.6" stroke="#2a6a9c" stroke-width="2.6" stroke-linecap="round"/><path d="M6.8 13.4 L15.6 7.2" stroke="#cfe6f5" stroke-width="0.8"/></svg>
<span class="a" style="left:713.40px;top:113.70px;font-size:12.5px;font-weight:normal;color:#242424;font-family:'Liberation Sans',sans-serif;transform:scaleX(0.9436);">Formatar como Tabela</span>
<svg class="a" style="left:835px;top:119.5px;" width="7" height="5" viewBox="0 0 7 5"><path d="M0.7 0.6 L3.5 3.6 L6.3 0.6" fill="none" stroke="#303030" stroke-width="1.1"/></svg>
<svg class="a" style="left:692px;top:138px;" width="18" height="17" viewBox="0 0 18 17"><path d="M4.3 4.4 H16.3 L4.3 14.4 Z" fill="#8ec3e8"/>
<path d="M11 14.4 H1.7 V1.7 H16.3 V8" fill="none" stroke="#222" stroke-width="1.05"/>
<path d="M1.7 4.4 H16.3 M4.3 1.7 V14.4" stroke="#222" stroke-width="0.9"/>
<path d="M5 14.8 L16.4 5.4" stroke="#2a6a9c" stroke-width="2.6" stroke-linecap="round"/><path d="M6.6 13.6 L15.6 6.1" stroke="#cfe6f5" stroke-width="0.8"/></svg>
<span class="a" style="left:713.40px;top:139.60px;font-size:12.5px;font-weight:normal;color:#242424;font-family:'Liberation Sans',sans-serif;transform:scaleX(0.9076);">Estilos de Célula</span>
<svg class="a" style="left:801.5px;top:145.5px;" width="7" height="5" viewBox="0 0 7 5"><path d="M0.7 0.6 L3.5 3.6 L6.3 0.6" fill="none" stroke="#303030" stroke-width="1.1"/></svg>
<span class="a" style="left:759.80px;top:161.36px;font-size:12px;font-weight:normal;color:#242424;font-family:'Liberation Sans',sans-serif;transform:scaleX(0.8997);">Estilos</span>
<div class="a" style="left:870px;top:82px;width:1px;height:90px;background:#e1e1e1"></div>
<svg class="a" style="left:882px;top:86px;" width="18" height="16" viewBox="0 0 18 16"><rect x="6.6" y="5.5" width="9.5" height="4.8" fill="#b5d8ef"/><rect x="11.3" y="5.5" width="4.8" height="4.8" fill="#5aa8d6"/>
<rect x="1.8" y="1.8" width="14.3" height="12.2" fill="none" stroke="#222" stroke-width="1.05"/>
<path d="M6.6 1.8 V5.5 M6.6 10.3 V14 M11.3 1.8 V14 M6.6 5.5 H16.1 M1.8 10.3 H16.1 M6.6 1.8" stroke="#222" stroke-width="0.9"/>
<path d="M10.5 7.9 H2.8 M5.2 5.5 L2.8 7.9 L5.2 10.3" fill="none" stroke="#3a87b5" stroke-width="1.1"/></svg>
<span class="a" style="left:903.40px;top:87.90px;font-size:12.5px;font-weight:normal;color:#242424;font-family:'Liberation Sans',sans-serif;transform:scaleX(0.9099);">Inserir</span>
<svg class="a" style="left:952.5px;top:93.5px;" width="7.5" height="5" viewBox="0 0 7.5 5"><path d="M0.7 0.6 L3.75 3.6 L6.8 0.6" fill="none" stroke="#303030" stroke-width="1.1"/></svg>
<svg class="a" style="left:882px;top:112px;" width="19" height="16" viewBox="0 0 19 16"><path d="M1.8 2.2 H16.1 M1.8 13.8 H16.1 M1.8 2.2 V5.5 M1.8 10.3 V13.8 M16.1 2.2 V5 M16.1 10.6 V13.8 M6.6 2.2 V5.5 M6.6 10.3 V13.8 M11.3 2.2 V5.5 M11.3 10.3 V13.8 M1.8 5.5 H4 M1.8 10.3 H4" fill="none" stroke="#222" stroke-width="1"/>
<rect x="4" y="5.5" width="5.5" height="4.8" fill="#5aa8d6" stroke="#222" stroke-width="0.9"/>
<path d="M12.6 5.6 L16.8 10.2 M16.8 5.6 L12.6 10.2" stroke="#e25555" stroke-width="1.1"/></svg>
<span class="a" style="left:903.40px;top:113.70px;font-size:12.5px;font-weight:normal;color:#242424;font-family:'Liberation Sans',sans-serif;transform:scaleX(0.8879);">Excluir</span>
<svg class="a" style="left:954.5px;top:119.5px;" width="7.5" height="5" viewBox="0 0 7.5 5"><path d="M0.7 0.6 L3.75 3.6 L6.8 0.6" fill="none" stroke="#303030" stroke-width="1.1"/></svg>
<svg class="a" style="left:882px;top:137px;" width="18" height="18" viewBox="0 0 18 18"><rect x="4" y="7.6" width="9" height="4.4" fill="#5aa8d6"/>
<rect x="1.8" y="4.3" width="14.3" height="12" fill="none" stroke="#222" stroke-width="1.05"/>
<path d="M6.6 4.3 V16.3 M11.3 4.3 V16.3 M1.8 7.6 H16.1 M1.8 12 H16.1" stroke="#222" stroke-width="0.9"/>
<path d="M3.3 2.2 H12.8 M3.3 1.2 V3.2 M12.8 1.2 V3.2" stroke="#2a5f80" stroke-width="1"/></svg>
<span class="a" style="left:903.40px;top:139.60px;font-size:12.5px;font-weight:normal;color:#242424;font-family:'Liberation Sans',sans-serif;transform:scaleX(0.9309);">Formatar</span>
<svg class="a" style="left:955px;top:145.5px;" width="7.5" height="5" viewBox="0 0 7.5 5"><path d="M0.7 0.6 L3.75 3.6 L6.8 0.6" fill="none" stroke="#303030" stroke-width="1.1"/></svg>
<span class="a" style="left:906.70px;top:161.36px;font-size:12px;font-weight:normal;color:#242424;font-family:'Liberation Sans',sans-serif;transform:scaleX(0.8896);">Células</span>
<div class="a" style="left:978px;top:82px;width:1px;height:90px;background:#e1e1e1"></div>
<svg class="a" style="left:992px;top:86px;" width="15" height="16" viewBox="0 0 15 16"><path d="M13.5 1.4 H1.8 L7.6 7.9 L1.8 14.5 H13.5" fill="none" stroke="#303030" stroke-width="1.15" stroke-linejoin="miter"/></svg>
<svg class="a" style="left:1019.5px;top:92px;" width="7.5" height="5" viewBox="0 0 7.5 5"><path d="M0.7 0.6 L3.75 3.6 L6.8 0.6" fill="none" stroke="#303030" stroke-width="1.1"/></svg>
<svg class="a" style="left:991px;top:112px;" width="17" height="15" viewBox="0 0 17 15"><rect x="0.7" y="0.7" width="14.8" height="12.8" fill="#f3f9fd" stroke="#303030" stroke-width="1"/>
<path d="M0.5 2.6 H15.5" stroke="#303030" stroke-width="1"/>
<path d="M8 5 V11.5 M5.5 9 L8 11.5 L10.5 9" fill="none" stroke="#3a87b5" stroke-width="1.1"/></svg>
<svg class="a" style="left:1012px;top:118.5px;" width="7.5" height="5" viewBox="0 0 7.5 5"><path d="M0.7 0.6 L3.75 3.6 L6.8 0.6" fill="none" stroke="#303030" stroke-width="1.1"/></svg>
<svg class="a" style="left:990px;top:137px;" width="17" height="17" viewBox="0 0 17 17"><path d="M1.3 11 L10.8 1.3 L16 6.5 L6.5 16 Z" fill="#fff" stroke="#6b3a78" stroke-width="1.1" stroke-linejoin="round"/>
<path d="M1.3 11 L5 7.3 L9.3 11.6 L6.5 16 Z" fill="#d77ee0" stroke="#6b3a78" stroke-width="1.1" stroke-linejoin="round"/></svg>
<svg class="a" style="left:1012.5px;top:145px;" width="7.5" height="5" viewBox="0 0 7.5 5"><path d="M0.7 0.6 L3.75 3.6 L6.8 0.6" fill="none" stroke="#303030" stroke-width="1.1"/></svg>
<svg class="a" style="left:1051px;top:87px;" width="30" height="28" viewBox="0 0 30 28"><path d="M1.3 12.5 L5.9 1.2 L10.5 12.5 M3 8.2 H8.8" fill="none" stroke="#4a8cb5" stroke-width="1.1"/>
<path d="M1.8 15.5 H9.8 L1.6 26.3 H10.2" fill="none" stroke="#303030" stroke-width="1.1"/>
<path d="M13.4 7.6 H28.2 V8.6 L22.3 15.4 V22.2 H19.4 V15.4 L13.4 8.6 Z" fill="none" stroke="#303030" stroke-width="1.1" stroke-linejoin="miter"/></svg>
<span class="a" style="left:1039.50px;top:121.00px;font-size:12.5px;font-weight:normal;color:#242424;font-family:'Liberation Sans',sans-serif;transform:scaleX(0.9142);">Classificar</span>
<span class="a" style="left:1041.70px;top:136.60px;font-size:12.5px;font-weight:normal;color:#242424;font-family:'Liberation Sans',sans-serif;transform:scaleX(0.9159);">e Filtrar</span>
<svg class="a" style="left:1084.5px;top:142.5px;" width="6" height="5" viewBox="0 0 6 5"><path d="M0.7 0.6 L3.0 3.6 L5.3 0.6" fill="none" stroke="#303030" stroke-width="1.1"/></svg>
<svg class="a" style="left:1116px;top:86px;" width="31" height="31" viewBox="0 0 31 31"><circle cx="19.4" cy="11.3" r="10" fill="none" stroke="#3a3a3a" stroke-width="1.2"/><path d="M12.3 18.4 L1.5 29.3" stroke="#3a3a3a" stroke-width="1.2" stroke-linecap="round"/></svg>
<span class="a" style="left:1104.70px;top:121.00px;font-size:12.5px;font-weight:normal;color:#242424;font-family:'Liberation Sans',sans-serif;transform:scaleX(0.8950);">Localizar e</span>
<span class="a" style="left:1099.50px;top:136.60px;font-size:12.5px;font-weight:normal;color:#242424;font-family:'Liberation Sans',sans-serif;transform:scaleX(0.9058);">Selecionar</span>
<svg class="a" style="left:1157px;top:142.5px;" width="6" height="5" viewBox="0 0 6 5"><path d="M0.7 0.6 L3.0 3.6 L5.3 0.6" fill="none" stroke="#303030" stroke-width="1.1"/></svg>
<span class="a" style="left:1060.50px;top:161.36px;font-size:12px;font-weight:normal;color:#242424;font-family:'Liberation Sans',sans-serif;transform:scaleX(0.8926);">Edição</span>
<div class="a" style="left:1174px;top:82px;width:1px;height:90px;background:#e1e1e1"></div>
<svg class="a" style="left:1206px;top:86px;" width="29" height="29" viewBox="0 0 29 29"><rect x="0.7" y="0.7" width="27.6" height="27.6" fill="none" stroke="#b9562f" stroke-width="1.3"/>
<rect x="3.6" y="3.6" width="9.4" height="9.4" fill="none" stroke="#b9562f" stroke-width="1.1"/><rect x="16" y="3.6" width="9.4" height="9.4" fill="none" stroke="#b9562f" stroke-width="1.1"/>
<rect x="3.6" y="16" width="9.4" height="9.4" fill="none" stroke="#b9562f" stroke-width="1.1"/><rect x="16" y="16" width="9.4" height="9.4" fill="none" stroke="#b9562f" stroke-width="1.1"/></svg>
<span class="a" style="left:1185.00px;top:120.90px;font-size:12.5px;font-weight:normal;color:#242424;font-family:'Liberation Sans',sans-serif;transform:scaleX(0.9457);">Suplementos</span>
<span class="a" style="left:1186.50px;top:161.36px;font-size:12px;font-weight:normal;color:#242424;font-family:'Liberation Sans',sans-serif;transform:scaleX(0.9423);">Suplementos</span>
<div class="a" style="left:1264px;top:82px;width:1px;height:90px;background:#e1e1e1"></div>
<svg class="a" style="left:1276px;top:82px;" width="40" height="36" viewBox="0 0 40 36"><defs><linearGradient id="cp1" x1="0" y1="0" x2="0" y2="1"><stop offset="0" stop-color="#1f9ee8"/><stop offset="0.5" stop-color="#35b46e"/><stop offset="1" stop-color="#eec22a"/></linearGradient>
<linearGradient id="cp2" x1="0" y1="0" x2="0" y2="1"><stop offset="0" stop-color="#a752e0"/><stop offset="0.5" stop-color="#ef4f91"/><stop offset="1" stop-color="#f57c4c"/></linearGradient></defs>
<path d="M11 5.5 H25 Q28.8 5.5 28.2 9 L27.4 13 H24 L17.5 25 H8.5 Q5 25 5.6 21.5 L8 9 Q8.6 5.5 11 5.5 Z" fill="url(#cp1)"/>
<path d="M20 5.5 H25 Q28.8 5.5 28.2 9 L27.4 13 H23.5 Q22 8 20 5.5 Z" fill="#1f55c9"/>
<path d="M27.2 13 H31.5 Q35.2 13 34.6 16.5 L32 28.5 Q31.3 32 27.8 32 H17.5 Q13.8 32 14.4 28.5 L15 25 H20.5 Z" fill="url(#cp2)"/>
<path d="M15 25 H20.5 L19 32 H17.5 Q13.8 32 14.4 28.5 Z" fill="#e9572c"/></svg>
<span class="a" style="left:1276.50px;top:120.90px;font-size:12.5px;font-weight:normal;color:#242424;font-family:'Liberation Sans',sans-serif;transform:scaleX(0.9895);">Copilot</span>
<div class="a" style="left:1327px;top:82px;width:1px;height:90px;background:#e1e1e1"></div>
<svg class="a" style="left:1338px;top:161px;" width="12" height="7" viewBox="0 0 12 7"><path d="M1 1 L6 6 L11 1" fill="none" stroke="#3a3a3a" stroke-width="1.2"/></svg>
<svg class="a" style="left:60px;top:698px;" width="24" height="22" viewBox="0 0 24 22"><circle cx="11.9" cy="6.2" r="1.7" fill="none" stroke="#222" stroke-width="1.1"/>
<path d="M10 7.2 L7.2 6.7 Q6.1 6.6 6.1 7.6 Q6.2 8.5 7.2 8.6 L9.4 9.2 V12.8 L8.6 16.2 Q8.4 17.5 10 17.6" fill="none" stroke="#222" stroke-width="1.1" stroke-linejoin="round"/>
<path d="M13.8 7.2 L16.6 6.7 Q17.7 6.6 17.7 7.6 Q17.6 8.5 16.6 8.6 L14.4 9.2 V12.3" fill="none" stroke="#222" stroke-width="1.1" stroke-linejoin="round"/>
<path d="M12.4 14.2 L15.4 17.3 L20.8 12.2" fill="none" stroke="#222" stroke-width="1.1"/></svg>
<svg class="a" style="left:1079px;top:702px;" width="14" height="14" viewBox="0 0 14 14"><rect x="0.5" y="0.5" width="12" height="12" fill="none" stroke="#222" stroke-width="1.1"/>
<path d="M0.5 4.5 H12.5 M0.5 8.5 H12.5 M4.5 0.5 V12.5 M8.5 0.5 V12.5" stroke="#222" stroke-width="1.1"/></svg>
<svg class="a" style="left:1119px;top:702px;" width="14" height="14" viewBox="0 0 14 14"><rect x="0.5" y="0.5" width="13" height="12" fill="none" stroke="#222" stroke-width="1.1"/>
<rect x="3.5" y="2.5" width="7" height="8" fill="none" stroke="#222" stroke-width="1"/>
<path d="M4.5 5.5 H9.5 M4.5 7.5 H9.5" stroke="#222" stroke-width="1"/></svg>
<svg class="a" style="left:1159px;top:702px;" width="14" height="14" viewBox="0 0 14 14"><rect x="0.5" y="0.5" width="13" height="12" fill="none" stroke="#222" stroke-width="1.1"/>
<path d="M0.5 6.5 H7.5 V0.5 M4.5 0.5 V6.5" fill="none" stroke="#222" stroke-width="1.1"/></svg>
<div class="a" style="left:1192px;top:708px;width:8px;height:1px;background:#333"></div>
<div class="a" style="left:1205px;top:709px;width:100px;height:1px;background:#555"></div>
<div class="a" style="left:1253px;top:704px;width:5px;height:10px;background:#6b6b6b;border-radius:1px"></div>
<svg class="a" style="left:1310px;top:704px;" width="9" height="9" viewBox="0 0 9 9"><path d="M4.5 0.5 V8.5 M0.5 4.5 H8.5" stroke="#333" stroke-width="1"/></svg>
</body></html>
